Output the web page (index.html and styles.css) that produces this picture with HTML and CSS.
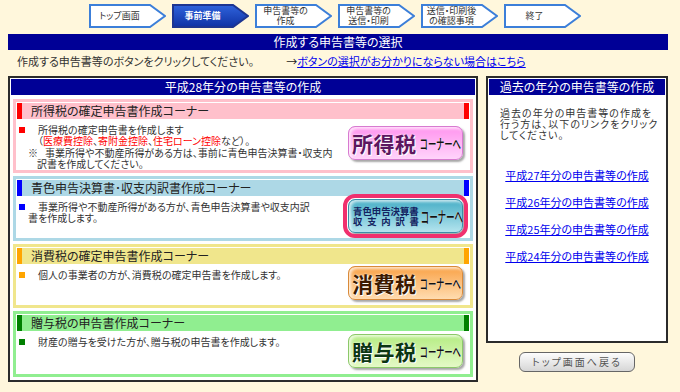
FILE: index.html
```html
<!DOCTYPE html>
<html lang="ja">
<head>
    <meta charset="UTF-8">
    <title>作成する申告書等の選択</title>
    <link rel="stylesheet" href="styles.css">
</head>
<body>
    <div class="steps">
        <div class="step">
            <svg class="step-shape" viewBox="0 0 77 24"><polygon points="1,1 61,1 76,12 61,23 1,23"/></svg>
            <span class="step-label">トップ画面</span>
        </div>
        <div class="step step-active">
            <svg class="step-shape" viewBox="0 0 77 24">
                <defs>
                    <linearGradient id="stepActive" x1="0" y1="0" x2="0" y2="1">
                        <stop offset="0" stop-color="#2f63dc"/>
                        <stop offset="1" stop-color="#0f32a4"/>
                    </linearGradient>
                </defs>
                <polygon points="1,1 61,1 76,12 61,23 1,23"/>
            </svg>
            <span class="step-label">事前準備</span>
        </div>
        <div class="step">
            <svg class="step-shape" viewBox="0 0 77 24"><polygon points="1,1 61,1 76,12 61,23 1,23"/></svg>
            <span class="step-label">申告書等の<br>作成</span>
        </div>
        <div class="step">
            <svg class="step-shape" viewBox="0 0 77 24"><polygon points="1,1 61,1 76,12 61,23 1,23"/></svg>
            <span class="step-label">申告書等の<br>送信・印刷</span>
        </div>
        <div class="step">
            <svg class="step-shape" viewBox="0 0 77 24"><polygon points="1,1 61,1 76,12 61,23 1,23"/></svg>
            <span class="step-label">送信・印刷後<br>の確認事項</span>
        </div>
        <div class="step">
            <svg class="step-shape" viewBox="0 0 77 24"><polygon points="1,1 61,1 76,12 61,23 1,23"/></svg>
            <span class="step-label">終了</span>
        </div>
    </div>

    <div class="title-bar">作成する申告書等の選択</div>

    <div class="guide">
        作成する申告書等のボタンをクリックしてください。<span class="guide-arrow">→</span><a href="#">ボタンの選択がお分かりにならない場合はこちら</a>
    </div>

    <div class="main">
        <div class="panel current">
            <div class="panel-head">平成28年分の申告書等の作成</div>

            <div class="corner corner-income">
                <div class="corner-head">
                    <span class="mark"></span>
                    <span class="corner-title">所得税の確定申告書作成コーナー</span>
                    <span class="mark"></span>
                </div>
                <div class="corner-body">
                    <div class="desc">
                        <p class="item"><span class="bullet"></span>所得税の確定申告書を作成します<br>（<span class="red">医療費控除</span>、<span class="red">寄附金控除</span>、<span class="red">住宅ローン控除</span>など）。</p>
                        <p class="note"><span class="note-mark">※</span>事業所得や不動産所得がある方は、事前に青色申告決算書・収支内<br>訳書を作成してください。</p>
                    </div>
                    <a class="corner-btn btn-income" href="#"><span class="btn-name">所得税</span><span class="corner-label">コーナーへ</span></a>
                </div>
            </div>

            <div class="corner corner-blue">
                <div class="corner-head">
                    <span class="mark"></span>
                    <span class="corner-title">青色申告決算書･収支内訳書作成コーナー</span>
                    <span class="mark"></span>
                </div>
                <div class="corner-body">
                    <div class="desc">
                        <p class="item item-wrap"><span class="bullet"></span>事業所得や不動産所得がある方が、青色申告決算書や収支内訳<br>書を作成します。</p>
                    </div>
                    <a class="corner-btn btn-blue" href="#">
                        <span class="blue-name"><span>青色申告決算書</span><span class="spread">収支内訳書</span></span>
                        <span class="corner-label label-big">コーナーへ</span>
                    </a>
                </div>
            </div>

            <div class="corner corner-consumption">
                <div class="corner-head">
                    <span class="mark"></span>
                    <span class="corner-title">消費税の確定申告書作成コーナー</span>
                    <span class="mark"></span>
                </div>
                <div class="corner-body">
                    <div class="desc">
                        <p class="item"><span class="bullet"></span>個人の事業者の方が、消費税の確定申告書を作成します。</p>
                    </div>
                    <a class="corner-btn btn-consumption" href="#"><span class="btn-name">消費税</span><span class="corner-label">コーナーへ</span></a>
                </div>
            </div>

            <div class="corner corner-gift">
                <div class="corner-head">
                    <span class="mark"></span>
                    <span class="corner-title">贈与税の申告書作成コーナー</span>
                    <span class="mark"></span>
                </div>
                <div class="corner-body">
                    <div class="desc">
                        <p class="item"><span class="bullet"></span>財産の贈与を受けた方が、贈与税の申告書を作成します。</p>
                    </div>
                    <a class="corner-btn btn-gift" href="#"><span class="btn-name">贈与税</span><span class="corner-label">コーナーへ</span></a>
                </div>
            </div>
        </div>

        <div class="side">
            <div class="panel past">
                <div class="panel-head">過去の年分の申告書等の作成</div>
                <p class="past-text">過去の年分の申告書等の作成を<br>行う方は、以下のリンクをクリック<br>してください。</p>
                <div class="past-links">
                    <a href="#">平成27年分の申告書等の作成</a>
                    <a href="#">平成26年分の申告書等の作成</a>
                    <a href="#">平成25年分の申告書等の作成</a>
                    <a href="#">平成24年分の申告書等の作成</a>
                </div>
            </div>
            <a class="back-btn" href="#">トップ画面へ戻る</a>
        </div>
    </div>
</body>
</html>
```

FILE: styles.css
```css
* {
    margin: 0;
    padding: 0;
    box-sizing: border-box;
}

body {
    background-color: #fff7dc;
    color: #333;
    font-family: "Noto Sans CJK JP", sans-serif;
    font-feature-settings: "palt";
    font-size: 11px;
    line-height: 1.2;
}

a {
    color: #0000ee;
}

/* step navigation */
.steps {
    display: flex;
    gap: 6px;
    height: 34px;
    padding: 4px 0 0 89px;
}

.step {
    position: relative;
    width: 77px;
    height: 24px;
}

.step-shape {
    position: absolute;
    left: 0;
    top: 0;
    width: 77px;
    height: 24px;
}

.step-shape polygon {
    fill: #fff;
    stroke: #3c7fd9;
    stroke-width: 2;
}

.step-active .step-shape polygon {
    fill: url(#stepActive);
    stroke: #1d3591;
}

.step-label {
    position: relative;
    display: flex;
    align-items: center;
    justify-content: center;
    width: 61px;
    height: 24px;
    font-size: 9px;
    line-height: 10px;
    text-align: center;
    color: #333;
}

.step-active .step-label {
    color: #fff;
    font-weight: bold;
}

.title-bar {
    margin: 0 12px 0 8px;
    height: 16px;
    background: #000096;
    color: #fff;
    font-size: 12px;
    line-height: 16px;
    text-align: center;
}

.guide {
    height: 26px;
    padding: 5px 0 0 17px;
    line-height: 12px;
}

.guide-arrow {
    margin-left: 32px;
    color: #222;
}

/* panels */
.main {
    display: flex;
    align-items: flex-start;
    gap: 8px;
    padding-left: 8px;
}

.panel {
    border: 2px solid #2b2b2b;
    background: #fff;
    padding: 1px;
}

.panel-head {
    height: 16px;
    background: #000096;
    color: #fff;
    font-size: 12px;
    line-height: 16px;
    text-align: center;
}

.current {
    width: 470px;
    padding-bottom: 3px;
}

.corner {
    margin: 3px 2px 0;
    border: 3px solid;
    padding: 1px;
}

.panel-head + .corner {
    margin-top: 4px;
}

.corner-head {
    display: flex;
    align-items: center;
    height: 16px;
}

.mark {
    width: 5px;
    height: 16px;
}

.corner-title {
    flex: 1;
    margin-left: 9px;
    font-size: 12px;
    line-height: 16px;
    color: #222;
}

.corner-body {
    display: flex;
    justify-content: space-between;
    align-items: center;
    padding: 0 6px 2px 1px;
}

.desc {
    align-self: flex-start;
    padding-top: 5px;
    font-size: 10px;
    line-height: 11px;
    color: #333;
}

.item {
    padding-left: 20px;
}

.item-wrap {
    padding-left: 10px;
}

.bullet {
    display: inline-block;
    width: 6px;
    height: 6px;
    margin: 0 13px 0 -19px;
    vertical-align: 1px;
}

.item-wrap .bullet {
    margin-left: -9px;
}

.note {
    margin-top: 1px;
    padding-left: 19px;
    text-indent: -9px;
}

.note-mark {
    margin-right: 7px;
}

.red {
    color: #f00;
}

.corner-income { border-color: #ffc0cb; }
.corner-income .corner-head { background: #ffc0cb; }
.corner-income .mark,
.corner-income .bullet { background: #f00; }
.corner-income .corner-body { height: 50px; }

.corner-blue { border-color: #add8e6; }
.corner-blue .corner-head { background: #add8e6; }
.corner-blue .mark,
.corner-blue .bullet { background: #00f; }
.corner-blue .corner-body { height: 41px; }

.corner-consumption { border-color: #f0e68c; }
.corner-consumption .corner-head { background: #f0e68c; }
.corner-consumption .mark,
.corner-consumption .bullet { background: #ffa500; }
.corner-consumption .corner-body { height: 40px; }

.corner-gift { border-color: #90ee90; }
.corner-gift .corner-head { background: #90ee90; }
.corner-gift .mark,
.corner-gift .bullet { background: #008000; }
.corner-gift .corner-body { height: 42px; }

/* corner buttons */
.corner-btn {
    display: flex;
    align-items: center;
    gap: 3px;
    flex-shrink: 0;
    width: 115px;
    height: 34px;
    padding-left: 3px;
    border-radius: 7px;
    box-shadow: 2px 2px 2px rgba(0,0,0,0.35), inset 2px 2px 3px rgba(255,255,255,0.7);
    text-decoration: none;
    overflow: hidden;
}

.btn-name {
    flex-shrink: 0;
    font-size: 21px;
    font-weight: bold;
    letter-spacing: 0.5px;
    line-height: 1;
    white-space: nowrap;
    text-shadow: 0 0 2px #fff, 1px 1px 0 #fff;
}

.corner-label {
    display: inline-block;
    flex-shrink: 0;
    width: 41px;
    font-size: 14px;
    font-weight: 500;
    line-height: 1;
    color: #111;
    white-space: nowrap;
    transform: scaleX(0.6);
    transform-origin: left center;
    text-shadow: 0 0 1px #fff;
}

.btn-income {
    border: 1px solid #d77ad0;
    background: linear-gradient(#ff94ee, #ffd4fb);
}

.btn-income .btn-name { color: #5c1660; }

.btn-consumption {
    border: 1px solid #d98a3a;
    background: linear-gradient(#f9a247, #ffdcb0);
}

.btn-consumption .btn-name { color: #3c1a00; }

.btn-gift {
    border: 1px solid #8cc86a;
    background: linear-gradient(#b4ec82, #e4f9c6);
}

.btn-gift .btn-name { color: #0b3612; }

.btn-blue {
    gap: 2px;
    padding-left: 4px;
    border: 1px solid #3a8ea8;
    background: linear-gradient(#46aec6, #b4e4ee);
    outline: 4px solid #f0306e;
    outline-offset: 1px;
    overflow: visible;
}

.blue-name {
    display: flex;
    flex-direction: column;
    flex-shrink: 0;
    width: 66px;
    font-size: 9.4px;
    font-weight: bold;
    line-height: 10px;
    white-space: nowrap;
    color: #132260;
    font-feature-settings: normal;
}

.spread {
    text-align: justify;
    text-align-last: justify;
}

.label-big {
    width: 43px;
    font-size: 16px;
    transform: scaleX(0.54);
}

/* past years */
.side {
    width: 182px;
}

.past {
    height: 267px;
}

.past-text {
    margin-top: 12px;
    padding-left: 11px;
    font-size: 10px;
    letter-spacing: 1px;
    line-height: 11px;
    color: #333;
}

.past-links {
    display: flex;
    flex-direction: column;
    align-items: center;
    gap: 14px;
    margin-top: 29px;
    font-size: 11px;
    line-height: 13px;
}

.back-btn {
    display: block;
    width: 116px;
    height: 20px;
    margin: 9px auto 0;
    border: 1px solid #666;
    border-radius: 6px;
    background: linear-gradient(#fdfdfd, #d6d6d6);
    color: #555;
    font-size: 10px;
    letter-spacing: 2px;
    line-height: 18px;
    text-align: center;
    text-decoration: none;
}
```
